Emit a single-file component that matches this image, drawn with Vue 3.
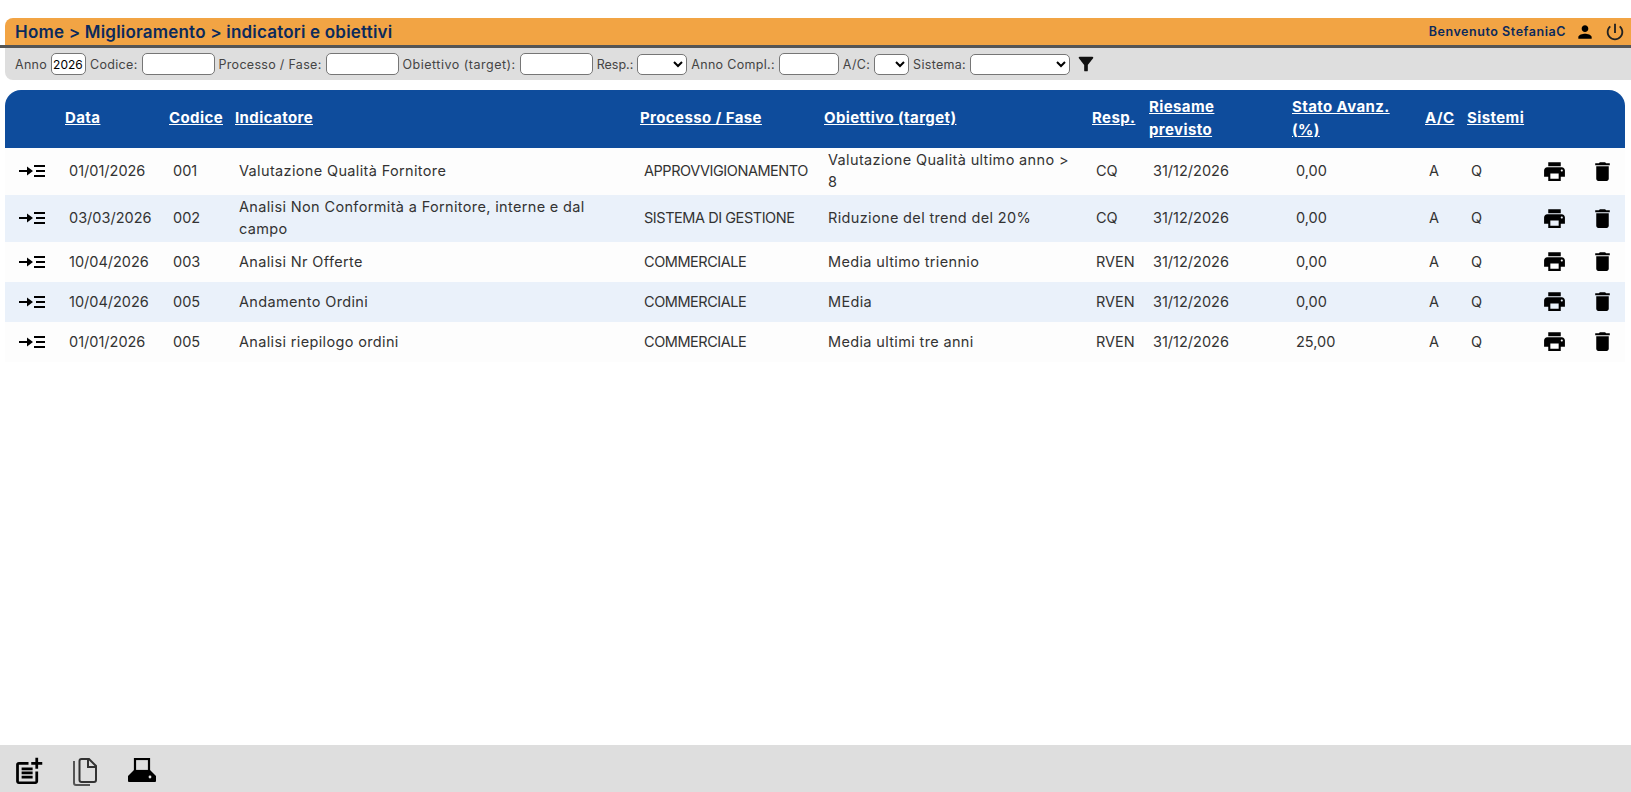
<script setup>
const columns = [
  { label: 'Data' },
  { label: 'Codice' },
  { label: 'Indicatore' },
  { label: 'Processo / Fase' },
  { label: 'Obiettivo (target)' },
  { label: 'Resp.' },
  { label: 'Riesame previsto' },
  { label: 'Stato Avanz. (%)' },
  { label: 'A/C' },
  { label: 'Sistemi' }
]

const rows = [
  { data: '01/01/2026', codice: '001', indicatore: 'Valutazione Qualità Fornitore', processo: 'APPROVVIGIONAMENTO', obiettivo: 'Valutazione Qualità ultimo anno > 8', resp: 'CQ', riesame: '31/12/2026', stato: '0,00' },
  { data: '03/03/2026', codice: '002', indicatore: 'Analisi Non Conformità a Fornitore, interne e dal campo', processo: 'SISTEMA DI GESTIONE', obiettivo: 'Riduzione del trend del 20%', resp: 'CQ', riesame: '31/12/2026', stato: '0,00' },
  { data: '10/04/2026', codice: '003', indicatore: 'Analisi Nr Offerte', processo: 'COMMERCIALE', obiettivo: 'Media ultimo triennio', resp: 'RVEN', riesame: '31/12/2026', stato: '0,00' },
  { data: '10/04/2026', codice: '005', indicatore: 'Andamento Ordini', processo: 'COMMERCIALE', obiettivo: 'MEdia', resp: 'RVEN', riesame: '31/12/2026', stato: '0,00' },
  { data: '01/01/2026', codice: '005', indicatore: 'Analisi riepilogo ordini', processo: 'COMMERCIALE', obiettivo: 'Media ultimi tre anni', resp: 'RVEN', riesame: '31/12/2026', stato: '25,00' }
]

const printPath = 'M19 8H5c-1.66 0-3 1.34-3 3v6h4v4h12v-4h4v-6c0-1.66-1.34-3-3-3zm-3 11H8v-5h8v5zm3-7c-.55 0-1-.45-1-1s.45-1 1-1 1 .45 1 1-.45 1-1 1zm-1-9H6v4h12V3z'
const trashPath = 'M6 19c0 1.1.9 2 2 2h8c1.1 0 2-.9 2-2V7H6v12zM19 4h-3.5l-1-1h-5l-1 1H5v2h14V4z'
</script>

<template>
  <div class="page">
    <header class="topbar">
      <span class="crumbs">Home &gt; Miglioramento &gt; indicatori e obiettivi</span>
      <div class="user">
        <span>Benvenuto StefaniaC</span>
        <svg class="user-icon" viewBox="0 0 24 24"><path d="M12 12c2.21 0 4-1.79 4-4s-1.79-4-4-4-4 1.79-4 4 1.79 4 4 4zm0 2c-2.67 0-8 1.34-8 4v2h16v-2c0-2.66-5.33-4-8-4z" /></svg>
        <svg class="user-icon power" viewBox="0 0 24 24"><path d="M13 3h-2v10h2V3zm4.83 2.17l-1.42 1.42C17.99 7.86 19 9.81 19 12c0 3.87-3.13 7-7 7s-7-3.13-7-7c0-2.19 1.01-4.14 2.58-5.42L6.17 5.17C4.23 6.82 3 9.26 3 12c0 4.97 4.03 9 9 9s9-4.03 9-9c0-2.74-1.23-5.18-3.17-6.83z" /></svg>
      </div>
    </header>

    <div class="filters">
      <label>Anno</label>
      <input class="w-anno" value="2026">
      <label>Codice:</label>
      <input class="w-text">
      <label>Processo / Fase:</label>
      <input class="w-text">
      <label class="label-target">Obiettivo (target):</label>
      <input class="w-text">
      <label class="label-resp">Resp.:</label>
      <select class="w-resp"><option></option></select>
      <label>Anno Compl.:</label>
      <input class="w-compl">
      <label>A/C:</label>
      <select class="w-ac"><option></option></select>
      <label>Sistema:</label>
      <select class="w-sis"><option></option></select>
      <svg class="funnel" viewBox="0 0 24 24"><path d="M4.25 5.61C6.27 8.2 10 13 10 13v6c0 .55.45 1 1 1h2c.55 0 1-.45 1-1v-6s3.72-4.8 5.74-7.39c.51-.66.04-1.61-.79-1.61H5.04c-.83 0-1.3.95-.79 1.61z" /></svg>
    </div>

    <table class="grid">
      <colgroup>
        <col style="width: 60px">
        <col style="width: 104px">
        <col style="width: 66px">
        <col style="width: 405px">
        <col style="width: 184px">
        <col style="width: 268px">
        <col style="width: 57px">
        <col style="width: 143px">
        <col style="width: 133px">
        <col style="width: 42px">
        <col style="width: 73px">
        <col style="width: 48px">
        <col>
      </colgroup>
      <thead>
        <tr>
          <th></th>
          <th v-for="col in columns" :key="col.label"><a href="#">{{ col.label }}</a></th>
          <th></th>
          <th></th>
        </tr>
      </thead>
      <tbody>
        <tr v-for="(row, i) in rows" :key="i">
          <td class="ico-cell">
            <svg class="indent" viewBox="0 0 26 14">
              <path d="M0 6h8V2.500L14 7l-6 4.500V8H0z" />
              <path d="M15 1h11v2H15zM17 6h9v2h-9zM15 11h11v2H15z" />
            </svg>
          </td>
          <td>{{ row.data }}</td>
          <td>{{ row.codice }}</td>
          <td class="wide">{{ row.indicatore }}</td>
          <td class="caps">{{ row.processo }}</td>
          <td class="wide">{{ row.obiettivo }}</td>
          <td>{{ row.resp }}</td>
          <td>{{ row.riesame }}</td>
          <td>{{ row.stato }}</td>
          <td>A</td>
          <td>Q</td>
          <td class="ico-cell"><svg class="action" viewBox="0 0 24 24"><path :d="printPath" /></svg></td>
          <td class="ico-cell"><svg class="action" viewBox="0 0 24 24"><path :d="trashPath" /></svg></td>
        </tr>
      </tbody>
    </table>

    <footer class="bottombar">
      <svg class="foot-add" viewBox="0 0 24 24"><path d="M17 19.220H5V7h7V5H5c-1.100 0-2 .9-2 2v12c0 1.100.9 2 2 2h12c1.100 0 2-.9 2-2v-7h-2v7.220zM19 2h-2v3h-3v2h3v3h2V7h3V5h-3V2zM7 9h8v2H7zM7 12h8v2H7zM7 15h8v2H7z" /></svg>
      <svg class="foot-copy" viewBox="0 0 24 29">
        <path d="M1 3v22a2 2 0 0 0 2 2h14" fill="none" stroke="#555" stroke-width="2" />
        <path d="M8.500 1H16l7 7v14a2 2 0 0 1-2 2H8.500a2 2 0 0 1-2-2V3a2 2 0 0 1 2-2z" fill="none" stroke="#333" stroke-width="2" />
        <path d="M15 1.500V9h7.500" fill="none" stroke="#333" stroke-width="2" />
      </svg>
      <svg class="foot-print" viewBox="0 0 28 24">
        <rect x="7" y="1" width="14" height="12" fill="none" stroke="#000" stroke-width="2.200" />
        <path d="M6 12h16l6 6v5a1 1 0 0 1-1 1H1a1 1 0 0 1-1-1v-5z" />
        <circle cx="22" cy="19" r="1.400" fill="#dedede" />
      </svg>
    </footer>
  </div>
</template>

<style scoped>
.page {
  min-height: 792px;
  padding-top: 18px;
  box-sizing: border-box;
  display: flex;
  flex-direction: column;
  font-family: Inter, "Open Sans", sans-serif;
  color: #333;
}

.topbar {
  margin-left: 5px;
  height: 27px;
  padding: 0 5px 0 10px;
  display: flex;
  align-items: center;
  justify-content: space-between;
  background: #f2a444;
  border-radius: 8px 0 0 0;
  color: #0b2a5c;
  position: relative;
}

.topbar::after {
  content: '';
  position: absolute;
  left: -5px;
  right: 0;
  bottom: -3px;
  height: 3px;
  background: #555;
}

.crumbs {
  font-size: 17px;
  font-weight: 600;
  letter-spacing: .2px;
}

.user {
  display: flex;
  align-items: center;
  font-size: 12.500px;
  font-weight: 600;
  letter-spacing: .55px;
}

.user-icon {
  width: 20px;
  height: 20px;
  margin-left: 9px;
  fill: #000;
}

.power {
  width: 22px;
  height: 22px;
  margin-left: 9px;
  fill: #222;
}

.filters {
  margin: 3px 0 0 5px;
  height: 32px;
  padding-left: 10px;
  display: flex;
  align-items: center;
  gap: 4px;
  background: #dedede;
  border-radius: 0 0 0 8px;
  font-size: 12.500px;
  letter-spacing: .3px;
  color: #444;
}

.label-target {
  letter-spacing: .5px;
}

.label-resp {
  letter-spacing: 0;
}

.filters input,
.filters select {
  box-sizing: border-box;
  height: 22px;
  border: 1px solid #767676;
  border-radius: 5px;
  background: #fff;
  font-family: inherit;
  font-size: 12px;
  letter-spacing: 0;
  padding: 0 1px;
  color: #000;
}

.filters select {
  height: 21px;
}

.w-anno { width: 35px; }
.w-text { width: 73px; }
.w-resp { width: 50px; }
.w-compl { width: 60px; }
.w-ac { width: 35px; }
.w-sis { width: 100px; }

.funnel {
  width: 22px;
  height: 22px;
  margin-left: 1px;
  fill: #111;
}

.grid {
  margin: 10px 0 0 5px;
  width: 1620px;
  table-layout: fixed;
  border-collapse: separate;
  border-spacing: 0;
  font-size: 14.500px;
}

.grid th {
  height: 58px;
  box-sizing: border-box;
  padding: 0 20px 3px 0;
  text-align: left;
  background: #0e4c9c;
  font-size: 15px;
  font-weight: 700;
  letter-spacing: .4px;
  line-height: 23px;
}

.grid th:first-child {
  border-top-left-radius: 16px;
}

.grid th:last-child {
  border-top-right-radius: 16px;
}

.grid th a {
  color: #fff;
  text-decoration: underline;
}

.grid td {
  padding: 1px 4px 2px;
  height: 40px;
  box-sizing: border-box;
  line-height: 22px;
  color: #333;
  background: #fdfdfd;
}

.grid tbody tr:nth-child(even) td {
  background: #eaf1fa;
}

.grid td.wide {
  padding-right: 18px;
  letter-spacing: .35px;
}

.grid td.caps {
  letter-spacing: -.45px;
}

.ico-cell {
  text-align: center;
}

.indent {
  width: 26px;
  height: 14px;
  display: block;
  margin-left: 10px;
  fill: #000;
}

.action {
  width: 25px;
  height: 25px;
  display: block;
  margin-left: -2px;
  fill: #000;
}

.bottombar {
  margin-top: auto;
  height: 47px;
  padding: 10px 0 0 12px;
  box-sizing: border-box;
  display: flex;
  align-items: flex-start;
  background: #dedede;
}

.foot-add {
  width: 33px;
  height: 33px;
  fill: #000;
}

.foot-copy {
  width: 24px;
  height: 29px;
  margin: 3px 0 0 28px;
}

.foot-print {
  width: 28px;
  height: 24px;
  margin: 3px 0 0 31px;
  fill: #000;
}
</style>

<style>
html, body {
  margin: 0;
  background: #fff;
}
</style>
